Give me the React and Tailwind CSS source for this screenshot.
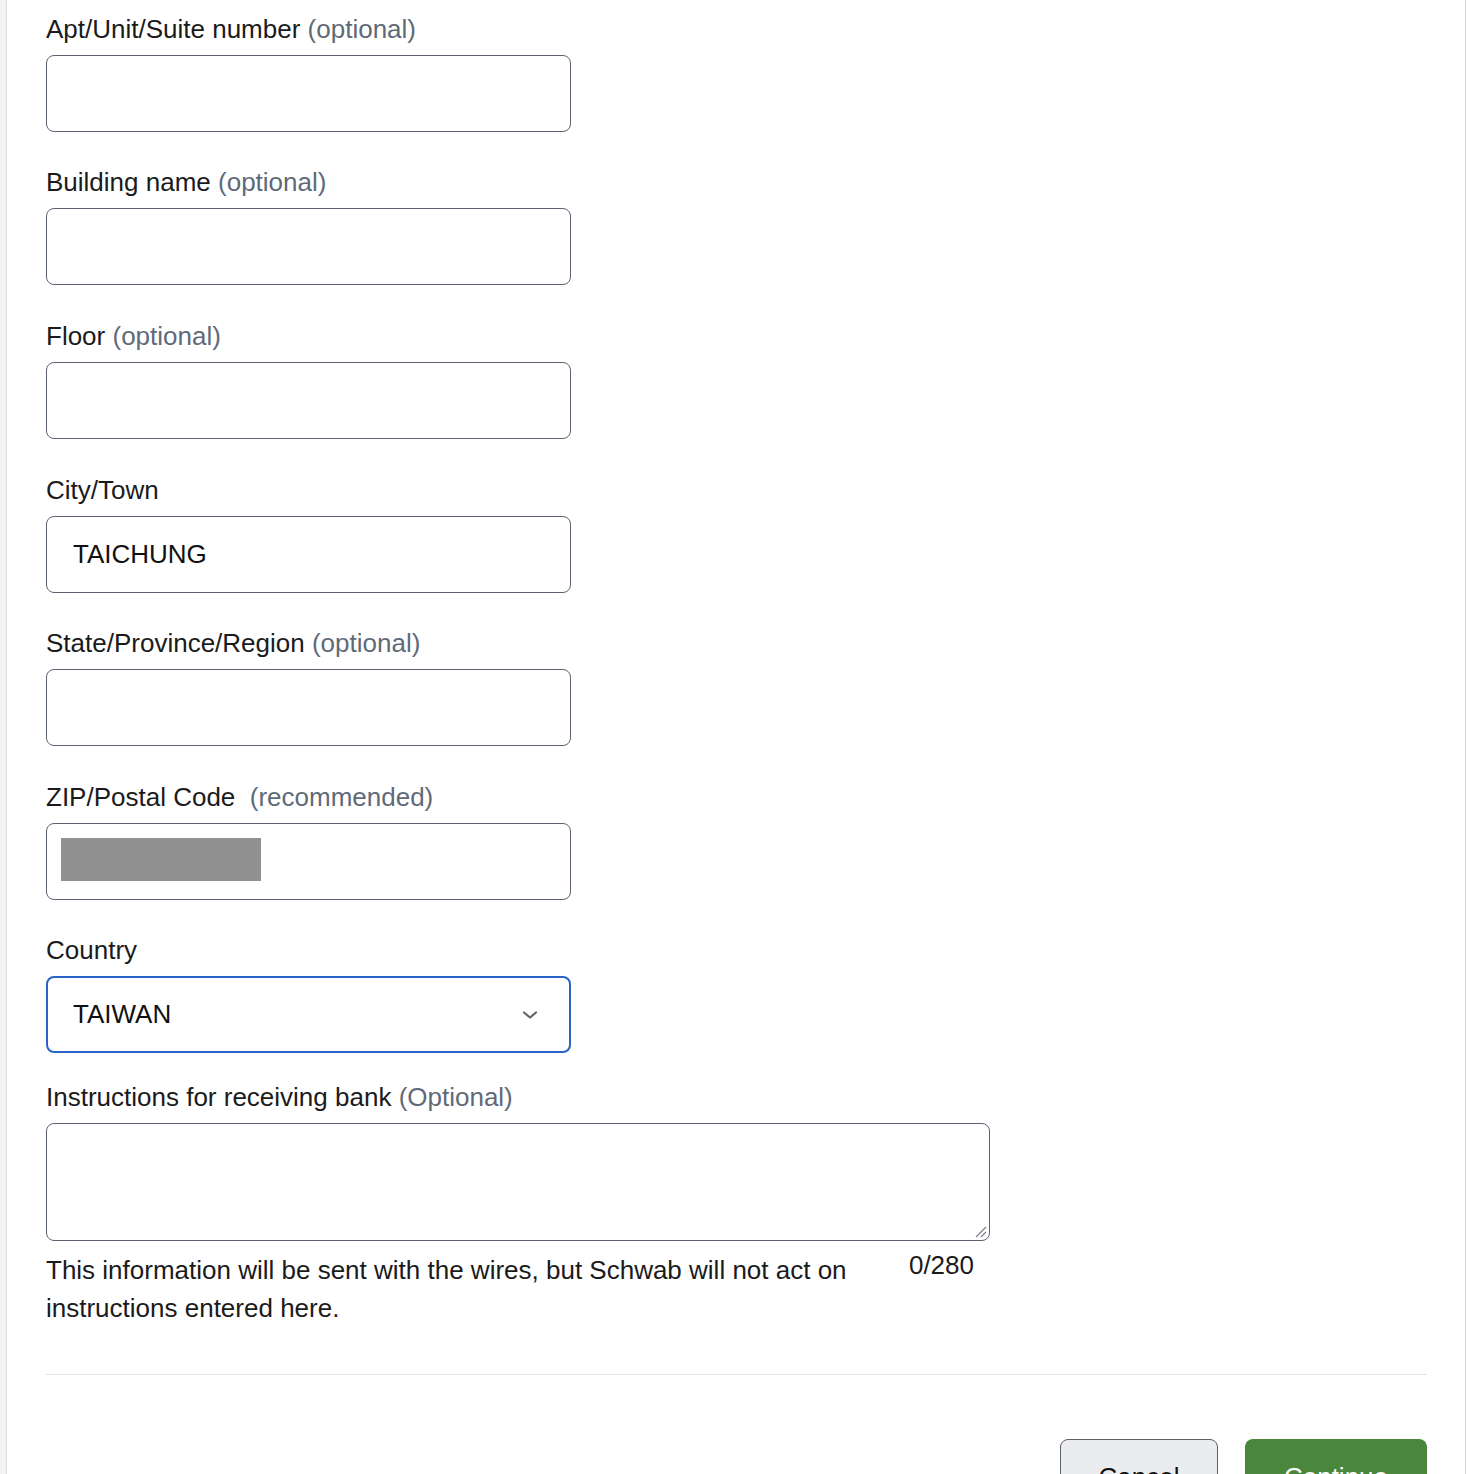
import React from "react";

const font = { fontFamily: '"Liberation Sans", Arial, Helvetica, sans-serif' };

function Label({ text, hint, gap = false }) {
  return (
    <div className="text-[26px] leading-[36px] text-[#1b1b1b] mb-2">
      {text}
      {gap ? "\u00a0 " : " "}
      {hint && <span className="text-[#5f6a78]">{hint}</span>}
    </div>
  );
}

function TextField({ value, children }) {
  return (
    <div className="relative w-[525px] h-[77px] border border-[#5b6370] rounded-[8px] bg-white flex items-center pl-[26px] text-[26px] text-[#111]">
      {value}
      {children}
    </div>
  );
}

export default function App() {
  return (
    <div style={font} className="flex min-h-screen bg-white">
      <div className="w-[6px] shrink-0 bg-[#f3f4f6] border-r border-[#dcdcdc] box-content" />
      <div className="flex-1 bg-white pl-[39px] pr-[38px] pt-[11px] pb-10 border-r border-[#d4d4d4]">
        <div className="mb-[32px]">
          <Label text="Apt/Unit/Suite number" hint="(optional)" />
          <TextField />
        </div>
        <div className="mb-[33px]">
          <Label text="Building name" hint="(optional)" />
          <TextField />
        </div>
        <div className="mb-[33px]">
          <Label text="Floor" hint="(optional)" />
          <TextField />
        </div>
        <div className="mb-[32px]">
          <Label text="City/Town" />
          <TextField value="TAICHUNG" />
        </div>
        <div className="mb-[33px]">
          <Label text="State/Province/Region" hint="(optional)" />
          <TextField />
        </div>
        <div className="mb-[32px]">
          <Label text="ZIP/Postal Code" hint="(recommended)" gap />
          <TextField>
            <div className="absolute left-[14px] top-[14px] w-[200px] h-[43px] bg-[#919191]" />
          </TextField>
        </div>
        <div className="mb-[26px]">
          <Label text="Country" />
          <div className="w-[525px] h-[77px] border-2 border-[#2a63c8] rounded-[8px] bg-white flex items-center justify-between pl-[25px] pr-[31px] text-[26px] text-[#111]">
            <span>TAIWAN</span>
            <svg width="16" height="10" viewBox="0 0 16 10" fill="none">
              <path d="M2 2.5 L8 7.5 L14 2.5" stroke="#5d6570" strokeWidth="2.2" strokeLinecap="round" strokeLinejoin="round" />
            </svg>
          </div>
        </div>
        <div>
          <Label text="Instructions for receiving bank" hint="(Optional)" />
          <div className="relative w-[944px] h-[118px] border border-[#5b6370] rounded-[8px] bg-white">
            <svg className="absolute right-[2px] bottom-[2px]" width="14" height="14" viewBox="0 0 14 14" fill="none">
              <path d="M3 13 L13 3 M8 13 L13 8" stroke="#7a7f87" strokeWidth="1.2" />
            </svg>
          </div>
          <div className="flex w-[944px] items-start mt-[10px]">
            <p className="w-[830px] text-[26px] leading-[38px] text-[#1b1b1b]">
              This information will be sent with the wires, but Schwab will not act on instructions entered here.
            </p>
            <span className="ml-auto mr-[16px] text-[26px] leading-[28px] text-[#1b1b1b]">0/280</span>
          </div>
        </div>
        <div className="h-px bg-[#e2e2e2] mt-[47px]" />
        <div className="flex justify-end gap-[27px] mt-[64px]">
          <button className="w-[158px] h-[76px] rounded-[8px] border border-[#5b6069] bg-[#ebecee] text-[26px] text-[#111]">
            Cancel
          </button>
          <button className="w-[182px] h-[76px] rounded-[8px] bg-[#4a873c] text-[26px] text-white">
            Continue
          </button>
        </div>
      </div>
    </div>
  );
}
